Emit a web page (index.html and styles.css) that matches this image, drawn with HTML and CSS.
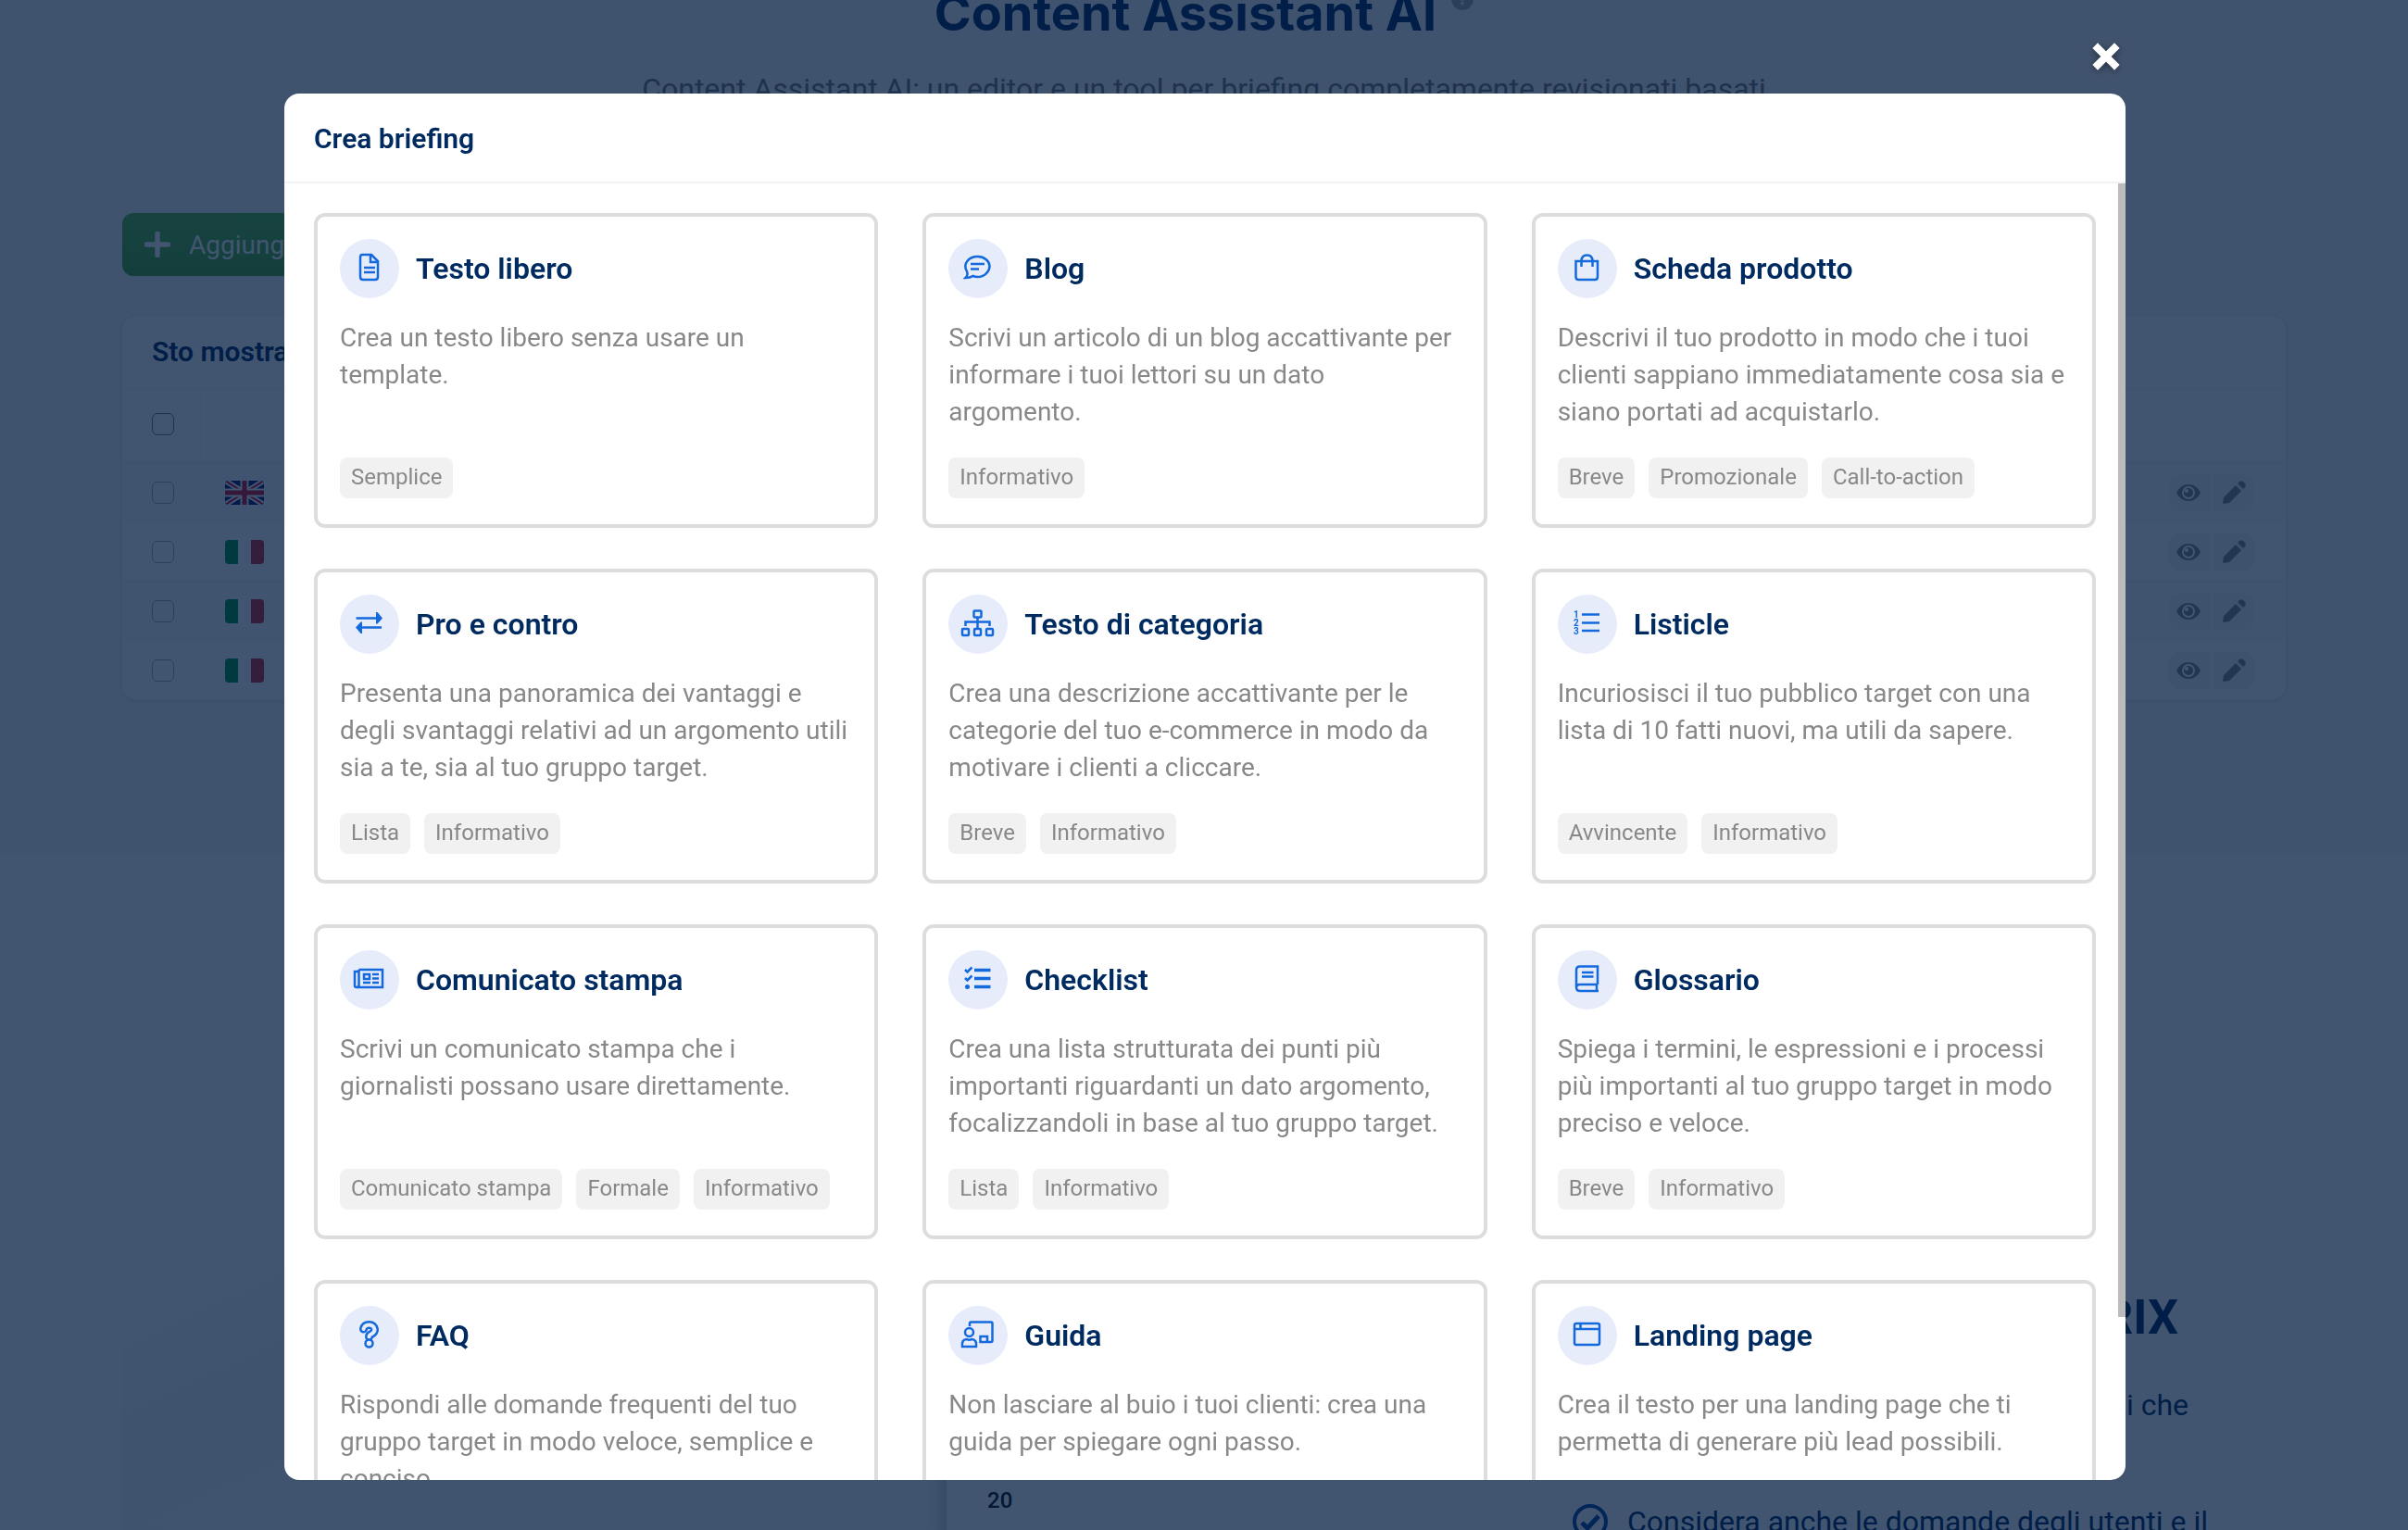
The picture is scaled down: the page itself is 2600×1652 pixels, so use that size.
FILE: index.html
```html
<!DOCTYPE html>
<html lang="it">
<head>
    <meta charset="UTF-8">
    <meta name="viewport" content="width=device-width, initial-scale=1.0">
    <title>Content Assistant AI</title>
    <link rel="stylesheet" href="styles.css">
</head>
<body>
    <svg class="symbols">
        <symbol id="eye" viewBox="0 0 28 28">
            <path d="M1 14C4 8 9 5 14 5s10 3 13 9c-3 6-8 9-13 9S4 20 1 14z" fill="currentColor"/>
            <circle cx="14" cy="14" r="6" fill="none" stroke="#fff" stroke-width="2"/>
            <circle cx="12" cy="12" r="2" fill="#fff"/>
        </symbol>
        <symbol id="pencil" viewBox="0 0 28 28">
            <path d="M2 26l1-7L16 6l6 6L9 25zM18 4l2-2c2-1 3-1 4 0l2 2c1 1 1 3 0 4l-2 2z" fill="currentColor"/>
        </symbol>
        <symbol id="flag-it" viewBox="0 0 42 26">
            <path d="M0 0h14v26H0z" fill="#009246"/>
            <path d="M14 0h14v26H14z" fill="#fff"/>
            <path d="M28 0h14v26H28z" fill="#ce2b37"/>
        </symbol>
        <symbol id="flag-gb" viewBox="0 0 42 26">
            <path d="M0 0h42v26H0z" fill="#012169"/>
            <path d="M0 0l42 26M42 0L0 26" stroke="#fff" stroke-width="6"/>
            <path d="M0 0l42 26M42 0L0 26" stroke="#c8102e" stroke-width="2"/>
            <path d="M21 0v26M0 13h42" stroke="#fff" stroke-width="9"/>
            <path d="M21 0v26M0 13h42" stroke="#c8102e" stroke-width="5"/>
        </symbol>
    </svg>

    <main class="page">
        <section class="tool">
            <div class="intro">
                <h1>Content Assistant AI <span class="help">?</span></h1>
                <p>Content Assistant AI: un editor e un tool per briefing completamente revisionati basati</p>
            </div>
            <button class="add-btn" type="button">
                <svg viewBox="0 0 26 26"><path d="M13 2v22M2 13h22" stroke="currentColor" stroke-width="5" stroke-linecap="round"/></svg>
                Aggiungi
            </button>
            <div class="list">
                <h2>Sto mostrando</h2>
                <table>
                    <thead>
                        <tr>
                            <th class="col-check"><input type="checkbox" aria-label="Seleziona tutti"></th>
                            <th></th>
                            <th class="col-actions"></th>
                        </tr>
                    </thead>
                    <tbody>
                        <tr>
                            <td><input type="checkbox" aria-label="Seleziona"></td>
                            <td><svg class="flag"><use href="#flag-gb"/></svg></td>
                            <td><div class="actions"><button type="button" aria-label="Mostra"><svg><use href="#eye"/></svg></button><button type="button" aria-label="Modifica"><svg><use href="#pencil"/></svg></button></div></td>
                        </tr>
                        <tr>
                            <td><input type="checkbox" aria-label="Seleziona"></td>
                            <td><svg class="flag"><use href="#flag-it"/></svg></td>
                            <td><div class="actions"><button type="button" aria-label="Mostra"><svg><use href="#eye"/></svg></button><button type="button" aria-label="Modifica"><svg><use href="#pencil"/></svg></button></div></td>
                        </tr>
                        <tr>
                            <td><input type="checkbox" aria-label="Seleziona"></td>
                            <td><svg class="flag"><use href="#flag-it"/></svg></td>
                            <td><div class="actions"><button type="button" aria-label="Mostra"><svg><use href="#eye"/></svg></button><button type="button" aria-label="Modifica"><svg><use href="#pencil"/></svg></button></div></td>
                        </tr>
                        <tr>
                            <td><input type="checkbox" aria-label="Seleziona"></td>
                            <td><svg class="flag"><use href="#flag-it"/></svg></td>
                            <td><div class="actions"><button type="button" aria-label="Mostra"><svg><use href="#eye"/></svg></button><button type="button" aria-label="Modifica"><svg><use href="#pencil"/></svg></button></div></td>
                        </tr>
                    </tbody>
                </table>
            </div>
        </section>

        <section class="promo">
            <div class="promo-art">
                <div class="chart">20</div>
            </div>
            <div class="promo-text">
                <h2>SISTRIX</h2>
                <p>contenuti che</p>
                <ul>
                    <li>
                        <svg viewBox="0 0 40 40" fill="none" stroke="currentColor" stroke-width="4"><circle cx="20" cy="20" r="17"/><path d="M11 21l6 6 12-13" stroke-width="5"/></svg>
                        Considera anche le domande degli utenti e il
                    </li>
                </ul>
            </div>
        </section>
    </main>

    <div class="overlay">
        <div class="dialog">
            <button class="close" type="button" aria-label="Chiudi">
                <svg viewBox="0 0 30 30"><path d="M6 6l18 18M24 6L6 24" stroke="currentColor" stroke-width="8" stroke-linecap="square"/></svg>
            </button>
            <div class="modal" role="dialog" aria-labelledby="modalTitle">
                <h2 class="modal-title" id="modalTitle">Crea briefing</h2>
                <div class="modal-body">
                    <div class="cards">
                        <a class="card" href="#">
                            <span class="card-head">
                                <svg class="icon" viewBox="0 0 64 64">
                                    <path d="M24 17h10l7 7v17q0 3-3 3H25q-3 0-3-3V20q0-3 2-3zM33 17v8h8M26 31h12M26 36h12"/>
                                </svg>
                                <span class="card-title">Testo libero</span>
                            </span>
                            <span class="card-text">Crea un testo libero senza usare un template.</span>
                            <span class="tags"><span>Semplice</span></span>
                        </a>
                        <a class="card" href="#">
                            <span class="card-head">
                                <svg class="icon" viewBox="0 0 64 64">
                                    <path d="M20 35c-5-8 2-16 11.500-16C39 19 44.500 24 44.500 29.500S39 41 31.500 41q-2.500 0-5-1-3 2-8 2 3-3 1.500-7zM24 27h15M24 32.500h9"/>
                                </svg>
                                <span class="card-title">Blog</span>
                            </span>
                            <span class="card-text">Scrivi un articolo di un blog accattivante per informare i tuoi lettori su un dato argomento.</span>
                            <span class="tags"><span>Informativo</span></span>
                        </a>
                        <a class="card" href="#">
                            <span class="card-head">
                                <svg class="icon" viewBox="0 0 64 64">
                                    <path d="M19.500 24h23.500v17q0 3-3 3H22.500q-3 0-3-3zM25.500 30v-6q0-6.500 6-6.500t6 6.500v6"/>
                                </svg>
                                <span class="card-title">Scheda prodotto</span>
                            </span>
                            <span class="card-text">Descrivi il tuo prodotto in modo che i tuoi clienti sappiano immediatamente cosa sia e siano portati ad acquistarlo.</span>
                            <span class="tags"><span>Breve</span><span>Promozionale</span><span>Call-to-action</span></span>
                        </a>
                        <a class="card" href="#">
                            <span class="card-head">
                                <svg class="icon" viewBox="0 0 64 64">
                                    <path d="M17.500 25.500H40M45 35.500H23"/>
                                    <path class="solid" d="M39 19l1.500 0 5.500 6.500-5.500 6H39zM24 29.500h-1.500l-5.500 6 5.500 6.500H24z"/>
                                </svg>
                                <span class="card-title">Pro e contro</span>
                            </span>
                            <span class="card-text">Presenta una panoramica dei vantaggi e degli svantaggi relativi ad un argomento utili sia a te, sia al tuo gruppo target.</span>
                            <span class="tags"><span>Lista</span><span>Informativo</span></span>
                        </a>
                        <a class="card" href="#">
                            <span class="card-head">
                                <svg class="icon" viewBox="0 0 64 64">
                                    <rect x="27.500" y="17.500" width="8" height="7" rx="1"/>
                                    <rect x="15" y="37" width="7" height="7" rx="1"/>
                                    <rect x="28" y="37" width="7" height="7" rx="1"/>
                                    <rect x="41" y="37" width="7" height="7" rx="1"/>
                                    <path d="M31.500 24.500V37M18.500 34v-4.500h26V34"/>
                                </svg>
                                <span class="card-title">Testo di categoria</span>
                            </span>
                            <span class="card-text">Crea una descrizione accattivante per le categorie del tuo e-commerce in modo da motivare i clienti a cliccare.</span>
                            <span class="tags"><span>Breve</span><span>Informativo</span></span>
                        </a>
                        <a class="card" href="#">
                            <span class="card-head">
                                <svg class="icon" viewBox="0 0 64 64">
                                    <path d="M26 21.500h19M26 30.500h19M26 39h19"/>
                                    <text x="17" y="25">1</text>
                                    <text x="17" y="34">2</text>
                                    <text x="17" y="43">3</text>
                                </svg>
                                <span class="card-title">Listicle</span>
                            </span>
                            <span class="card-text">Incuriosisci il tuo pubblico target con una lista di 10 fatti nuovi, ma utili da sapere.</span>
                            <span class="tags"><span>Avvincente</span><span>Informativo</span></span>
                        </a>
                        <a class="card" href="#">
                            <span class="card-head">
                                <svg class="icon" viewBox="0 0 64 64">
                                    <path d="M20.500 21h25.500v19H18q-2 0-2-2V23h4.500M20.500 21v17q0 2-2.500 2M35 26h7M35 30.500h7M25 35h8M35 35h7"/>
                                    <rect x="26" y="26" width="6" height="5"/>
                                </svg>
                                <span class="card-title">Comunicato stampa</span>
                            </span>
                            <span class="card-text">Scrivi un comunicato stampa che i giornalisti possano usare direttamente.</span>
                            <span class="tags"><span>Comunicato stampa</span><span>Formale</span><span>Informativo</span></span>
                        </a>
                        <a class="card" href="#">
                            <span class="card-head">
                                <svg class="icon" viewBox="0 0 64 64">
                                    <path class="bars" d="M28 21.500h17.500M28 30.500h17.500M28 39.500h17.500"/>
                                    <path d="M18 21l2.500 2.500 5-5M18 30l2.500 2.500 5-5"/>
                                    <circle class="solid" cx="20.500" cy="39.500" r="2.500"/>
                                </svg>
                                <span class="card-title">Checklist</span>
                            </span>
                            <span class="card-text">Crea una lista strutturata dei punti più importanti riguardanti un dato argomento, focalizzandoli in base al tuo gruppo target.</span>
                            <span class="tags"><span>Lista</span><span>Informativo</span></span>
                        </a>
                        <a class="card" href="#">
                            <span class="card-head">
                                <svg class="icon" viewBox="0 0 64 64">
                                    <path d="M43 37V17.500H24q-4 0-4 4V40q0 4 4 4h20M20 40q0-3 4-3h19M42 37v7M26 24h12.500M26 28.500h12.500"/>
                                </svg>
                                <span class="card-title">Glossario</span>
                            </span>
                            <span class="card-text">Spiega i termini, le espressioni e i processi più importanti al tuo gruppo target in modo preciso e veloce.</span>
                            <span class="tags"><span>Breve</span><span>Informativo</span></span>
                        </a>
                        <a class="card" href="#">
                            <span class="card-head">
                                <svg class="icon" viewBox="0 0 64 64">
                                    <path class="thick" d="M25.500 25q1-4.500 6-4.500t6 5q0 3-3.500 5-2.500 1-2.500 3"/>
                                    <path class="hollow" d="M25.500 25q1-4.500 6-4.500t6 5q0 3-3.500 5-2.500 1-2.500 3"/>
                                    <circle class="disc" cx="31.500" cy="40.500" r="4"/>
                                </svg>
                                <span class="card-title">FAQ</span>
                            </span>
                            <span class="card-text">Rispondi alle domande frequenti del tuo gruppo target in modo veloce, semplice e conciso.</span>
                            <span class="tags"><span>Informativo</span></span>
                        </a>
                        <a class="card" href="#">
                            <span class="card-head">
                                <svg class="icon" viewBox="0 0 64 64">
                                    <path d="M23 22v-3q0-1.500 1.500-1.500H46q1.500 0 1.500 1.500v18.500q0 1.500-1.500 1.500H34.500v-6H42v6"/>
                                    <circle cx="22.500" cy="28.500" r="4.500"/>
                                    <path d="M15 44q-1-8 5-8 2.500 1.500 5 0 6 0 5 8z"/>
                                </svg>
                                <span class="card-title">Guida</span>
                            </span>
                            <span class="card-text">Non lasciare al buio i tuoi clienti: crea una guida per spiegare ogni passo.</span>
                            <span class="tags"><span>Informativo</span></span>
                        </a>
                        <a class="card" href="#">
                            <span class="card-head">
                                <svg class="icon" viewBox="0 0 64 64">
                                    <rect x="18" y="19" width="27" height="23" rx="2"/>
                                    <path d="M18 25h27M24.500 19v6"/>
                                </svg>
                                <span class="card-title">Landing page</span>
                            </span>
                            <span class="card-text">Crea il testo per una landing page che ti permetta di generare più lead possibili.</span>
                            <span class="tags"><span>Promozionale</span></span>
                        </a>
                    </div>
                </div>
                <div class="scroll-thumb"></div>
            </div>
        </div>
    </div>
</body>
</html>
```
FILE: styles.css
```css
* {
    box-sizing: border-box;
}
body {
    margin: 0;
    font-family: Roboto, "Liberation Sans", sans-serif;
    font-size: 28px;
    color: #002b60;
    background: #fff;
}
h1, h2, p, ul {
    margin: 0;
    padding: 0;
}
button {
    font: inherit;
    border: 0;
    padding: 0;
    cursor: pointer;
}
.symbols {
    position: absolute;
    width: 0;
    height: 0;
}

/* page behind the dialog */
.page {
    height: 100vh;
    overflow: hidden;
}
.tool {
    padding: 0 132px 166px;
    background: #f5f5f5;
}
.intro {
    height: 230px;
    text-align: center;
}
.intro h1 {
    display: flex;
    align-items: flex-start;
    justify-content: center;
    gap: 16px;
    font-family: Inter, sans-serif;
    font-size: 54px;
    font-weight: 700;
    line-height: 28px;
}
.intro p {
    margin-top: 48px;
    font-size: 32px;
    line-height: 40px;
    color: #777;
}
.help {
    width: 24px;
    height: 24px;
    margin-top: -13px;
    border-radius: 50%;
    background: #aaa;
    color: #f5f5f5;
    font-size: 18px;
    line-height: 24px;
}
.add-btn {
    display: flex;
    align-items: center;
    gap: 20px;
    height: 68px;
    padding: 0 24px;
    border-radius: 12px;
    background: linear-gradient(#58b844, #4ca638);
    color: #fff;
}
.add-btn svg {
    width: 28px;
    height: 28px;
}
.list {
    margin-top: 43px;
    background: #fff;
    border-radius: 16px;
    box-shadow: 0 1px 4px rgba(0, 0, 0, 0.1);
    overflow: hidden;
}
.list h2 {
    padding: 0 32px;
    font-size: 30px;
    font-weight: 600;
    line-height: 78px;
}
table {
    width: 100%;
    border-collapse: collapse;
}
th, td {
    height: 64px;
    padding: 0 20px;
    border-top: 1px solid #eee;
}
th {
    height: 80px;
    border-right: 1px solid #f6f6f6;
}
.col-check {
    width: 91px;
}
.col-actions {
    width: 145px;
}
th:first-child {
    padding: 0 32px 4px;
}
td:first-child {
    padding: 0 32px;
}
td:last-child {
    padding: 0 32px 0 18px;
}
tbody tr:nth-child(odd) {
    background: #f9f9f9;
}
input[type="checkbox"] {
    appearance: none;
    display: block;
    width: 24px;
    height: 24px;
    margin: 0;
    border: 1px solid #aaa;
    border-radius: 6px;
}
th input[type="checkbox"] {
    border-color: #777;
}
.flag {
    display: block;
    width: 42px;
    height: 26px;
    border-radius: 4px;
}
.actions {
    display: flex;
    gap: 4px;
}
.actions button {
    display: flex;
    align-items: center;
    justify-content: center;
    width: 45px;
    height: 40px;
    background: #f2f2f2;
    color: #888;
}
.actions button:first-child {
    border-radius: 12px 0 0 12px;
}
.actions button:last-child {
    border-radius: 0 12px 12px 0;
}
.actions svg {
    width: 28px;
    height: 28px;
}
.promo {
    display: flex;
    gap: 62px;
    padding: 277px 132px 0;
}
.promo-art {
    flex: 1;
    height: 700px;
    padding-left: 890px;
    background: linear-gradient(155deg, #fff 10%, #f3f6fb 25%, #fafafa 70%);
}
.chart {
    height: 100%;
    padding: 407px 44px;
    background: #fff;
    box-shadow: -12px 0 20px -10px rgba(0, 0, 0, 0.25);
    color: #111;
    font-size: 24px;
    font-weight: 500;
    line-height: 28px;
}
.promo-text {
    width: 771px;
    padding-top: 194px;
}
.promo-text h2 {
    padding-right: 116px;
    font-size: 52px;
    font-weight: 700;
    line-height: 60px;
    text-align: right;
}
.promo-text p {
    margin-top: 40px;
    padding-right: 105px;
    font-size: 32px;
    line-height: 48px;
    text-align: right;
}
.promo-text ul {
    margin-top: 78px;
    list-style: none;
    font-size: 32px;
    line-height: 48px;
}
.promo-text li {
    display: flex;
    align-items: center;
    gap: 20px;
    white-space: nowrap;
}
.promo-text svg {
    width: 40px;
    height: 40px;
    color: #00489c;
}

/* dialog */
.overlay {
    position: fixed;
    inset: 0;
    padding: 0 0 54px 2px;
    background: rgba(0, 26, 62, 0.74);
}
.dialog {
    display: flex;
    flex-direction: column;
    width: 90%;
    max-width: 1988px;
    height: 100%;
    margin: 0 auto;
}
.close {
    flex: none;
    align-self: flex-end;
    height: 101px;
    padding: 20px 6px 0;
    background: none;
    color: #fff;
}
.close svg {
    display: block;
    width: 30px;
    height: 30px;
    filter: drop-shadow(0 2px 4px rgba(0, 0, 0, 0.4));
}
.modal {
    position: relative;
    display: flex;
    flex-direction: column;
    min-height: 0;
    background: #fff;
    border-radius: 16px;
    overflow: hidden;
}
.modal-title {
    flex: none;
    padding: 2px 32px 0;
    border-bottom: 2px solid #f2f2f2;
    font-size: 30px;
    font-weight: 600;
    line-height: 93px;
}
.modal-body {
    overflow-y: auto;
    scrollbar-width: none;
}
.scroll-thumb {
    position: absolute;
    top: 97px;
    right: 0;
    width: 8px;
    height: 1224px;
    background: #bbb;
}
.cards {
    display: grid;
    grid-template-columns: repeat(3, 1fr);
    gap: 44px 48px;
    padding: 32px 32px 76px;
}
.card {
    display: flex;
    flex-direction: column;
    padding: 24px 24px 28px;
    border: 4px solid #ddd;
    border-radius: 12px;
    color: #888;
    text-decoration: none;
}
.card-head {
    display: flex;
    align-items: center;
    gap: 18px;
}
.card-title {
    color: #002b60;
    font-size: 32px;
    font-weight: 600;
}
.card-text {
    min-height: 120px;
    margin: 23px 0 29px;
    line-height: 40px;
}
.tags {
    display: flex;
    gap: 15px;
}
.tags span {
    padding: 0 12px 2px;
    border-radius: 8px;
    background: #f1f1f1;
    font-size: 24px;
    line-height: 42px;
}
.icon {
    width: 64px;
    height: 64px;
    border-radius: 50%;
    background: #e6ecfa;
    fill: none;
    stroke: #1469dc;
    stroke-width: 2.5;
}
.icon .solid {
    fill: #1469dc;
    stroke: none;
}
.icon .bars {
    stroke-width: 3.5;
}
.icon .thick {
    stroke-width: 9;
    stroke-linecap: round;
}
.icon .hollow {
    stroke: #e6ecfa;
    stroke-width: 4;
    stroke-linecap: round;
}
.icon .disc {
    fill: #e6ecfa;
}
.icon text {
    fill: #1469dc;
    stroke: none;
    font-size: 10px;
    font-weight: 700;
}
```
